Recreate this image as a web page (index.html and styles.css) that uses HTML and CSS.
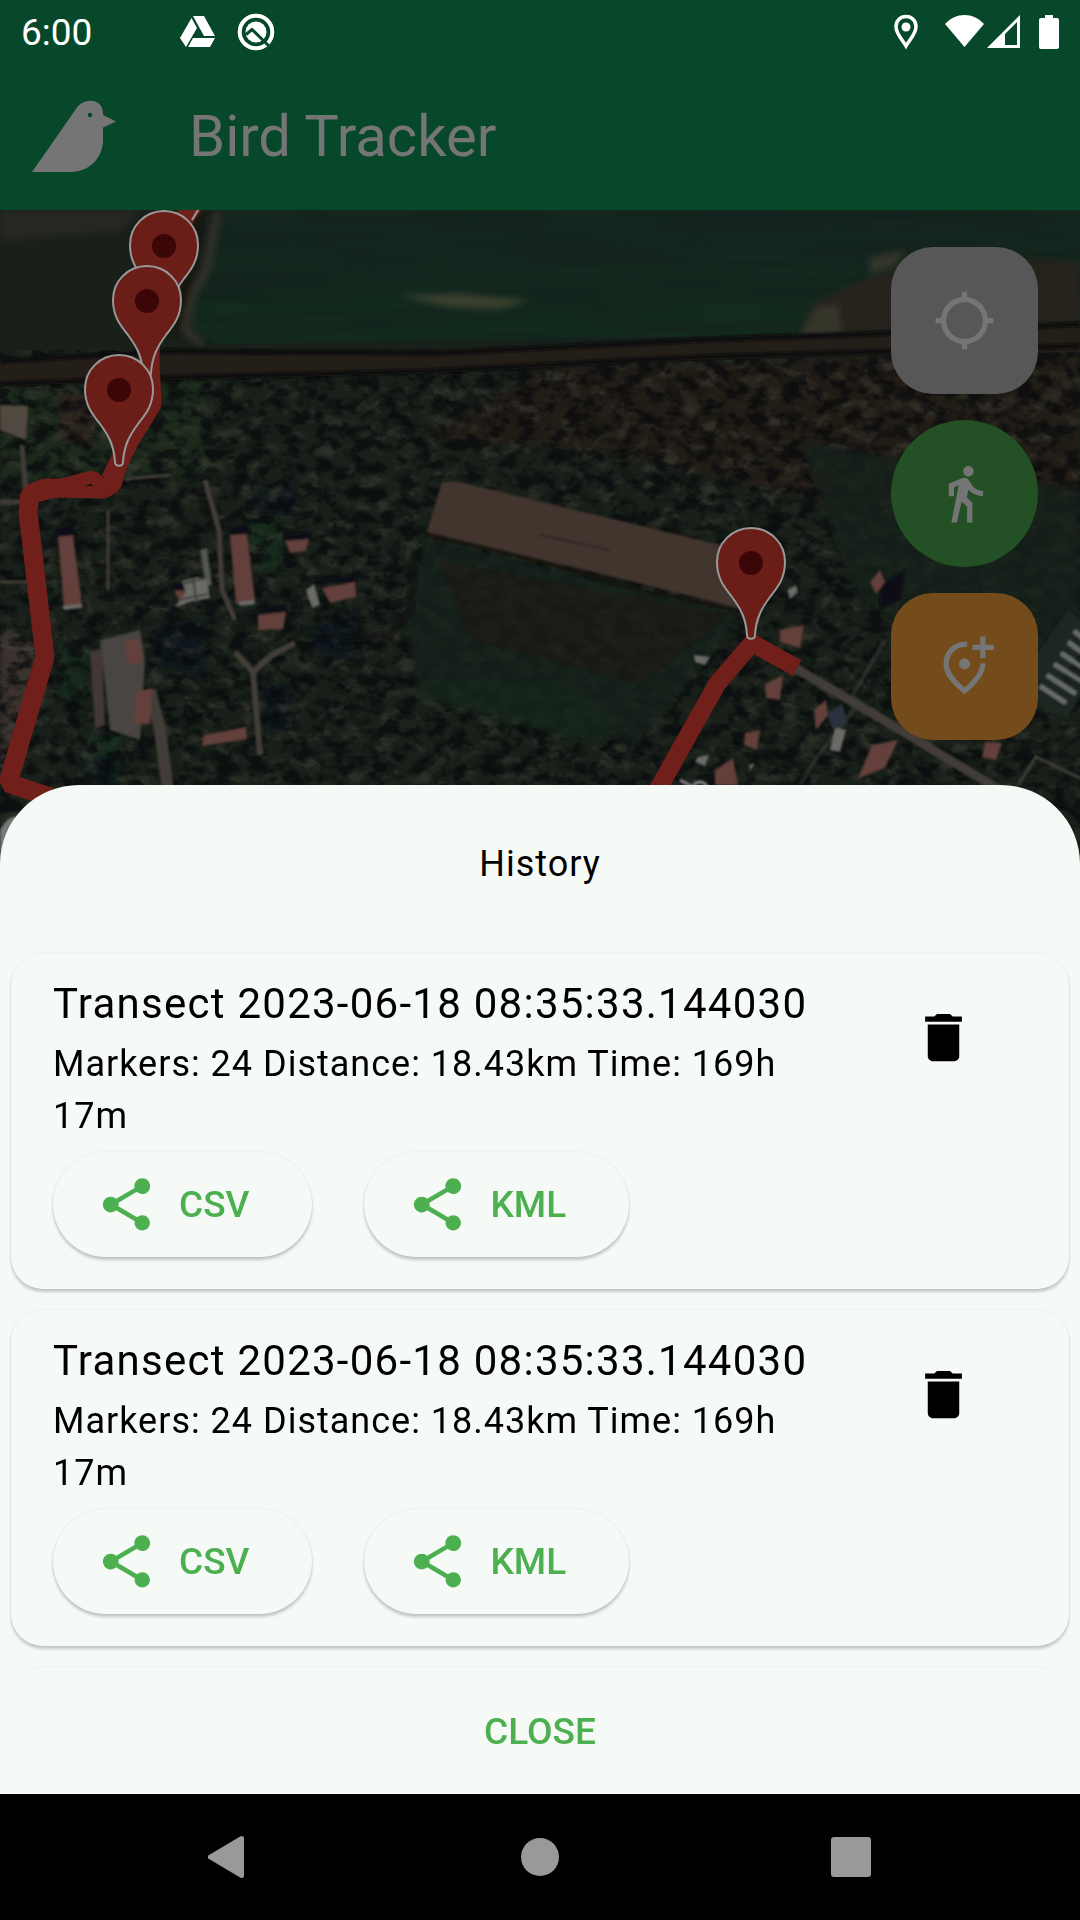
FILE: index.html
```html
<!DOCTYPE html>
<html lang="en">
<head>
<meta charset="utf-8">
<meta name="viewport" content="width=device-width, initial-scale=1">
<title>Bird Tracker</title>
<link rel="stylesheet" href="styles.css">
</head>
<body>
<svg class="defs" width="0" height="0" aria-hidden="true">
  <symbol id="share" viewBox="0 0 24 24"><path fill="currentColor" d="M18 16.08c-.76 0-1.44.3-1.96.77L8.91 12.7c.05-.23.09-.46.09-.7s-.04-.47-.09-.7l7.05-4.11c.54.5 1.25.81 2.04.81 1.66 0 3-1.34 3-3s-1.34-3-3-3-3 1.34-3 3c0 .24.04.47.09.7L8.04 9.81C7.5 9.31 6.79 9 6 9c-1.66 0-3 1.34-3 3s1.34 3 3 3c.79 0 1.5-.31 2.04-.81l7.12 4.16c-.05.21-.08.43-.08.65 0 1.61 1.31 2.92 2.92 2.92s2.92-1.31 2.92-2.92-1.31-2.92-2.92-2.92z"/></symbol>
  <symbol id="trash" viewBox="0 0 24 24"><path fill="currentColor" d="M6 19c0 1.100.9 2 2 2h8c1.100 0 2-.9 2-2V7H6v12zM19 4h-3.500l-1-1h-5l-1 1H5v2h14V4z"/></symbol>
  <symbol id="pin" viewBox="-36 0 72 116" overflow="visible"><path d="M0 1C19 1 34 16 34 35C34 52 26 61 19 70C10 82 5 92 4 108C4 113-4 113-4 108C-5 92-10 82-19 70C-26 61-34 52-34 35C-34 16-19 1 0 1Z" fill="#6b1d18" stroke="#999" stroke-width="2"/><circle cy="36" r="12" fill="#3a0607"/></symbol>
</svg>

<div class="screen">
  <header class="header">
    <div class="status">
      <span class="time">6:00</span>
      <svg class="drive" width="36" height="36" viewBox="0 0 36 36" fill="#fff" aria-hidden="true"><path d="M13 2h11l11 20H24zM11.500 4l5.500 10L6 33 0 24zM13 24h22l-5 9H8z"/></svg>
      <svg class="search" width="38" height="38" viewBox="0 0 38 38" fill="none" aria-hidden="true"><circle cx="19" cy="19" r="16.300" stroke="#fff" stroke-width="4"/><circle cx="19" cy="19" r="10.500" fill="#fff"/><path d="M9 21.500l6-5L34 35" stroke="#07482a" stroke-width="3"/></svg>
      <div class="signals">
        <svg width="24" height="36" viewBox="0 0 24 36" aria-hidden="true"><path d="M12 2.500C6 2.500 2 7 2 12.500 2 20 8 25 12 32c4-7 10-12 10-19.500C22 7 18 2.500 12 2.500Z" fill="none" stroke="#fff" stroke-width="3.500"/><circle cx="12" cy="13" r="4.500" fill="#fff"/></svg>
        <svg class="wifi" width="39" height="36" viewBox="0 0 39 36" fill="#fff" aria-hidden="true"><path d="M0 10C11-2 28-2 39 10L19.500 33Z"/></svg>
        <svg class="cell" width="33" height="36" viewBox="0 0 33 36" fill="#fff" fill-rule="evenodd" aria-hidden="true"><path d="M33 1V34H0ZM30 8L18 20V31H30Z"/></svg>
        <svg class="battery" width="20" height="36" viewBox="0 0 20 36" fill="#fff" aria-hidden="true"><path d="M6 1h8v3h4q2 0 2 2v27q0 2-2 2H2q-2 0-2-2V6q0-2 2-2h4z"/></svg>
      </div>
    </div>
    <div class="appbar">
      <svg class="bird" width="84" height="72" viewBox="0 0 84 72" aria-hidden="true"><path d="M0 72L46 6C55-3 72-1 71 15L84 21.500 71 27.500V40C71 58 57 72 39 72Z" fill="#757575"/><circle cx="58" cy="15" r="2.200" fill="#07482a"/></svg>
      <h1 class="app-title">Bird Tracker</h1>
    </div>
  </header>

  <main class="stage">
    <svg class="map" viewBox="0 210 1080 660" preserveAspectRatio="xMidYMin slice" role="img" aria-label="Satellite map with the recorded track">
      <defs>
        <filter id="grain" color-interpolation-filters="sRGB" x="0" y="0" width="100%" height="100%"><feTurbulence type="fractalNoise" baseFrequency=".06 .08" numOctaves="4" seed="7"/><feColorMatrix values="0 0 0 0 .03  0 0 0 0 .04  0 0 0 0 .05  4 0 0 0 -1.700"/></filter>
        <filter id="speck" color-interpolation-filters="sRGB" x="0" y="0" width="100%" height="100%"><feTurbulence type="fractalNoise" baseFrequency=".05 .07" numOctaves="4" seed="21"/><feColorMatrix values="0 0 0 0 .24  0 0 0 0 .24  0 0 0 0 .2  0 3.500 0 0 -1.700"/></filter>
        <filter id="streak" color-interpolation-filters="sRGB" x="0" y="0" width="100%" height="100%"><feTurbulence type="fractalNoise" baseFrequency=".006 .09" numOctaves="3" seed="3"/><feColorMatrix values="0 0 0 0 .08  0 0 0 0 .13  0 0 0 0 .11  2.500 0 0 0 -.9"/></filter>
        <filter id="soft" x="-20%" y="-20%" width="140%" height="140%"><feGaussianBlur stdDeviation="3"/></filter>
        <filter id="edge" x="-5%" y="-5%" width="110%" height="110%"><feGaussianBlur stdDeviation="1"/></filter>
        <linearGradient id="field" x1="0" y1="0" x2="0" y2="1"><stop offset="0" stop-color="#15261f"/><stop offset="1" stop-color="#122b1e"/></linearGradient>
      </defs>
      <rect y="210" width="1080" height="660" fill="#182019"/>
      <path d="M0 210H200L180 330 0 350Z" fill="#19201a"/>
      <g filter="url(#soft)">
        <path d="M0 210H140L120 232 0 240Z" fill="#252820"/>
        <path d="M540 370L1080 350V560L860 510 600 450 420 440Z" fill="#201b19"/>
        <path d="M0 390L200 370 210 470 120 480 0 480Z" fill="#1a2a1d"/>
        <path d="M60 390L100 400 90 450 60 440Z" fill="#2b211d"/>
        <path d="M0 630L40 645 45 700 0 780Z" fill="#3b302d"/>
        <path d="M60 640L90 650 85 700 62 700ZM85 735H120V780H85ZM250 520H280V570H250Z" fill="#12291a"/>
        <path d="M160 620L210 625 200 680 150 660ZM250 500L290 480 300 510 260 515ZM310 630L360 610 350 660 310 650ZM260 680L290 690V730H265ZM90 760L115 755V785H90Z" fill="#10131a"/>
      </g>
      <rect y="350" width="1080" height="520" filter="url(#speck)" opacity=".55"/>
      <rect y="350" width="1080" height="520" filter="url(#grain)" opacity=".75"/>
      <g filter="url(#soft)" opacity=".75">
        <path d="M425 540L740 612 690 680 640 740 420 700 405 620Z" fill="#16211a"/>
        <path d="M437 560L730 615 640 685 470 640Z" fill="#1b1b18"/>
        <path d="M415 680L560 680 620 720 600 745 430 700Z" fill="#12281b"/>
        <path d="M800 440L1080 490V690L860 600Z" fill="#16201a"/>
      </g>

      <path d="M225 210H1080V320L700 336 215 344 194 330 192 300 208 270Z" fill="url(#field)"/>
      <rect x="198" y="210" width="882" height="134" filter="url(#streak)" opacity=".6"/>
      <g filter="url(#soft)">
        <path d="M218 212L206 270 190 300 186 330 202 344" fill="none" stroke="#333329" stroke-width="8"/>
        <path d="M200 215L190 270 172 335" fill="none" stroke="#17130f" stroke-width="12"/>
        <path d="M400 296L460 294 530 300 500 309 450 307Z" fill="#3a412f"/>
        <path d="M800 335L812 304 850 285 890 272 960 255 1080 262V322Z" fill="#28221b"/>
        <path d="M815 308L838 305 842 335H800ZM870 274L895 266 905 250 870 258Z" fill="#35342a"/>
      </g>
      <path d="M0 362L180 352 340 353 700 340 1080 322V352L700 360 430 373 180 380 0 386Z" fill="#241e19"/>
      <path d="M0 361L170 351 250 352 440 353 700 340 870 334 1080 324M0 384L160 378 430 371 700 357 1080 346" fill="none" stroke="#0a0b0d" stroke-width="5" filter="url(#edge)"/>

      <g filter="url(#edge)">
      <path d="M442 482L460 482 720 545 755 560 738 608 610 576 427 532Z" fill="#43362f"/>
      <path d="M540 535L610 550" stroke="#342a29" stroke-width="3"/>
      <path d="M427 534L540 561 640 590 738 610" fill="none" stroke="#18130f" stroke-width="3"/>
      <path d="M415 550L410 610 390 635 340 640" fill="none" stroke="#0c1012" stroke-width="8" opacity=".7"/>

      <g fill="none" stroke="#423d39">
        <path d="M0 502H25M22 445L26 495" stroke-width="5"/>
        <path d="M790 665L860 706 1000 790" stroke-width="9"/>
        <path d="M850 700L885 640M855 708L815 760 800 785" stroke-width="4" opacity=".5"/>
        <path d="M205 480L219 530 222 590 235 620" stroke-width="5"/>
        <path d="M235 652L253 672 272 655 295 643M253 672L260 755" stroke-width="6"/>
        <path d="M150 690L160 730 168 790" stroke-width="12"/>
        <path d="M0 645Q18 651 36 648M0 582H40M125 479L170 475M108 510V590M1080 778L1036 757 1018 785" stroke-width="3"/>
      </g>
      <path d="M0 405L28 406 26 440 0 430Z" fill="#514a40"/>
      <path d="M100 640L140 630 145 660 140 740 110 730Z" fill="#4a4443"/>
      <path d="M200 550L207 548 212 585 206 587Z" fill="#555650"/>
      <g fill="#0c0f14">
        <path d="M55 528L72 524 76 536H55ZM228 528L248 524 250 535H228ZM284 534L312 532 310 540H284ZM322 578L356 575V583H322ZM258 608L286 604V613H258ZM172 584L190 580V590H172ZM940 530L970 525 965 550 940 545ZM880 585L905 570 900 600 880 610Z"/>
      </g>
      <g fill="#63413a">
        <path d="M58 537L73 535 82 605 64 608ZM230 535L247 534 255 600 236 604ZM125 640L140 640 142 662 127 665ZM135 692L152 688 150 724 134 724ZM204 735L246 727 247 739 202 746ZM258 615L286 612 283 629 258 630ZM322 588L355 582 356 597 330 603ZM285 541L309 539 306 551 290 553ZM174 591L188 590 183 606Z"/>
        <path d="M90 652L102 648 105 725 95 728Z" fill="#433736"/>
        <path d="M780 630L804 625 800 648 780 642ZM765 684L783 675 780 700 766 698ZM814 710L826 700 828 715 816 730ZM745 733L760 730 757 750 744 745ZM715 770L733 758 738 785H715ZM872 745L898 740 885 768 858 778ZM985 742L1002 743 996 760 982 757ZM870 582L880 570 885 582 876 594Z"/>
      </g>
      <g fill="#6b6a66">
        <path d="M62 606L82 604V608L64 610ZM238 602L254 600 255 604 240 606ZM306 590L314 584 320 605 312 608ZM182 581L198 577 207 580 210 598 190 602 175 607 186 592ZM694 655L710 657 705 665 695 662ZM698 757L709 755 705 766 695 762ZM787 590L796 585 798 592 790 599ZM835 727L846 730 840 752 830 750ZM749 765L755 763 750 771Z"/>
      </g>
      <path d="M827 713L842 704 848 724 833 730Z" fill="#2b303c"/>
      <path d="M182 584L205 578M178 600L208 594M193 578L197 604" stroke="#3a3d3d" stroke-width="2"/>
      <path d="M1040 680L1082 620M1038 686L1075 704" stroke="#1f2822" stroke-width="34"/>
      <g stroke="#686c69" stroke-width="5"><path d="M1040 686L1066 703M1047 675L1076 694M1054 664L1083 682M1061 653L1083 668M1068 642L1083 653M1074 631L1083 638"/></g>
      <path d="M0 830Q10 812 22 818L10 870H0Z" fill="#77797a"/>
      <path d="M680 780L695 788M692 790A8 8 0 0 1 708 790" fill="none" stroke="#858585" stroke-width="3"/>
      </g>

      <g fill="none" stroke="#701f1a" stroke-width="19" stroke-linejoin="bevel">
        <path d="M194 204L170 240 152 300 150 360 152 404 130 440 118 464 110 480"/>
        <path d="M118 464L112 484 104 489 45 488 30 494 28 512 45 657 8 783 50 797"/>
        <path d="M36 494L92 479 104 489" stroke-width="17"/>
        <path d="M797 668L752 643 717 684 652 800" stroke-width="18"/>
      </g>
      <path d="M85 486L91 484 93 486Z" fill="#0c0d0d"/>
      <path d="M192 220L198 210" stroke="#999" stroke-width="2"/>
      <use href="#pin" x="128" y="210" width="72" height="116"/>
      <use href="#pin" x="111" y="265" width="72" height="116"/>
      <use href="#pin" x="83" y="354" width="72" height="116"/>
      <use href="#pin" x="715" y="527" width="72" height="116"/>
    </svg>

    <div class="fabs">
      <button class="fab fab-locate" aria-label="My location"><svg width="63" height="63" viewBox="0 0 24 24"><path fill="currentColor" d="M20.940 11c-.46-4.170-3.770-7.480-7.940-7.940V1h-2v2.060C6.830 3.520 3.520 6.830 3.060 11H1v2h2.060c.46 4.170 3.770 7.480 7.940 7.940V23h2v-2.060c4.170-.46 7.480-3.770 7.940-7.940H23v-2h-2.060zM12 19c-3.870 0-7-3.130-7-7s3.130-7 7-7 7 3.130 7 7-3.130 7-7 7z"/></svg></button>
      <button class="fab fab-walk" aria-label="Start transect"><svg width="63" height="63" viewBox="0 0 24 24"><path fill="currentColor" d="M13.500 5.500c1.100 0 2-.9 2-2s-.9-2-2-2-2 .9-2 2 .9 2 2 2zM9.800 8.900L7 23h2.100l1.800-8 2.100 2v6h2v-7.500l-2.100-2 .6-3C14.800 12 16.800 13 19 13v-2c-1.900 0-3.500-1-4.300-2.400l-1-1.600c-.4-.6-1-1-1.700-1-.3 0-.5.100-.8.100L6 8.300V13h2V9.600l1.800-.7"/></svg></button>
      <button class="fab fab-marker" aria-label="Add marker"><svg width="63" height="63" viewBox="0 0 24 24"><path fill="none" stroke="currentColor" stroke-width="2" d="M13 3.600C8.500 3 5 6.800 5 11 5 14.300 7.300 17.300 12 21.300 16.700 17.300 19.100 14 19 10.800M19 .6V8.900M15 4.700H23.200"/><circle cx="12" cy="11" r="2.100" fill="currentColor"/></svg></button>
    </div>

    <section class="sheet" aria-labelledby="sheet-title">
      <h2 class="sheet-title" id="sheet-title">History</h2>
      <div class="list">
        <article class="card">
          <div class="card-body">
            <h3 class="card-title">Transect 2023-06-18 08:35:33.144030</h3>
            <p class="card-text">Markers: 24 Distance: 18.43km Time: 169h 17m</p>
            <div class="actions">
              <button class="share"><svg width="63" height="63" aria-hidden="true"><use href="#share"/></svg>CSV</button>
              <button class="share"><svg width="63" height="63" aria-hidden="true"><use href="#share"/></svg>KML</button>
            </div>
          </div>
          <button class="delete" aria-label="Delete transect"><svg width="63" height="63"><use href="#trash"/></svg></button>
        </article>
        <article class="card">
          <div class="card-body">
            <h3 class="card-title">Transect 2023-06-18 08:35:33.144030</h3>
            <p class="card-text">Markers: 24 Distance: 18.43km Time: 169h 17m</p>
            <div class="actions">
              <button class="share"><svg width="63" height="63" aria-hidden="true"><use href="#share"/></svg>CSV</button>
              <button class="share"><svg width="63" height="63" aria-hidden="true"><use href="#share"/></svg>KML</button>
            </div>
          </div>
          <button class="delete" aria-label="Delete transect"><svg width="63" height="63"><use href="#trash"/></svg></button>
        </article>
        <article class="card" aria-hidden="true"></article>
      </div>
      <button class="close">CLOSE</button>
    </section>
  </main>

  <nav class="navbar" aria-label="System">
    <button class="nav-btn" aria-label="Back"><svg width="42" height="42" viewBox="0 0 42 42" fill="#999"><path d="M33 0Q36 0 36 2V40Q36 42 33 42L1 23Q-2 21 1 19Z"/></svg></button>
    <button class="nav-btn" aria-label="Home"><svg width="42" height="42" viewBox="0 0 42 42" fill="#999"><circle cx="21" cy="21" r="19"/></svg></button>
    <button class="nav-btn" aria-label="Recents"><svg width="42" height="42" viewBox="0 0 42 42" fill="#999"><rect x="1" y="1" width="40" height="40" rx="3"/></svg></button>
  </nav>
</div>
</body>
</html>
```
FILE: styles.css
```css
* { box-sizing: border-box; }
body {
  margin: 0;
  background: #000;
  font-family: Roboto, "Noto Sans", sans-serif;
  color: #000;
}
h1, h2, h3, p { margin: 0; font-weight: 400; }
button {
  margin: 0;
  padding: 0;
  border: 0;
  background: none;
  font: inherit;
  color: inherit;
  cursor: pointer;
}
svg { display: block; flex: none; }
.defs { position: absolute; }

.screen {
  display: flex;
  flex-direction: column;
  min-height: 100vh;
}

.header { background: #07482a; }
.status {
  display: flex;
  align-items: center;
  height: 63px;
  padding: 0 21px;
  color: #fff;
}
.time { padding-top: 2px; font-size: 37px; line-height: 63px; }
.drive { margin-left: 88px; }
.search { margin-left: 21px; }
.signals {
  display: flex;
  align-items: center;
  margin-left: auto;
}
.wifi { margin-left: 27px; }
.cell { margin-left: 3px; }
.battery { margin-left: 19px; }

.appbar {
  display: flex;
  align-items: center;
  gap: 73px;
  height: 147px;
  padding: 0 32px 2px;
}
.app-title {
  font-size: 58px;
  line-height: 72px;
  color: #757575;
}

.stage {
  display: grid;
  flex: 1;
  grid-template-columns: minmax(0, 1fr);
}
.map, .fabs, .sheet { grid-area: 1 / 1; }
.map { width: 100%; align-self: start; }

.fabs {
  display: flex;
  flex-direction: column;
  gap: 26px;
  align-self: start;
  justify-self: end;
  padding: 37px 42px;
}
.fab {
  display: flex;
  align-items: center;
  justify-content: center;
  width: 147px;
  height: 147px;
  border-radius: 42px;
  color: #757575;
}
.fab-locate { background: #575757; }
.fab-walk { background: #235125; border-radius: 50%; }
.fab-marker { background: #744c1c; }

.sheet {
  display: flex;
  flex-direction: column;
  align-self: end;
  border-radius: 79px 79px 0 0;
  background: #f6faf6;
}
.sheet-title {
  padding: 53px 0 52px;
  font-size: 36px;
  line-height: 52px;
  letter-spacing: 1px;
  text-align: center;
}
.list {
  display: flex;
  flex-direction: column;
  gap: 21px;
  max-height: 726px;
  padding: 11px;
  overflow: hidden;
}
.card {
  display: flex;
  flex: none;
  gap: 42px;
  align-items: flex-start;
  min-height: 336px;
  padding: 19px 63px 32px 42px;
  border-radius: 32px;
  background: #f6faf6;
  box-shadow: 0 3px 3px rgba(0, 0, 0, .2), 0 0 2px rgba(0, 0, 0, .1);
}
.card-body { flex: 1; min-width: 0; }
.card-title {
  font-size: 42px;
  line-height: 63px;
  letter-spacing: .03em;
}
.card-text {
  margin-top: 3px;
  font-size: 36px;
  line-height: 52px;
  letter-spacing: 1px;
}
.actions {
  display: flex;
  gap: 52px;
  margin-top: 10px;
}
.share {
  display: flex;
  align-items: center;
  gap: 21px;
  height: 105px;
  padding: 0 63px 0 42px;
  border-radius: 53px;
  background: #f6faf6;
  box-shadow: 0 3px 3px rgba(0, 0, 0, .2), 0 0 2px rgba(0, 0, 0, .1);
  font-size: 37px;
  font-weight: 500;
  color: #4caf50;
}
.delete {
  display: flex;
  align-items: center;
  justify-content: center;
  width: 126px;
  height: 130px;
}
.close {
  align-self: center;
  height: 126px;
  padding: 0 32px;
  font-size: 37px;
  font-weight: 500;
  color: #4caf50;
}

.navbar {
  display: flex;
  justify-content: center;
  gap: 185px;
  height: 126px;
  background: #000;
}
.nav-btn {
  display: flex;
  align-items: center;
  justify-content: center;
  width: 126px;
}
```
